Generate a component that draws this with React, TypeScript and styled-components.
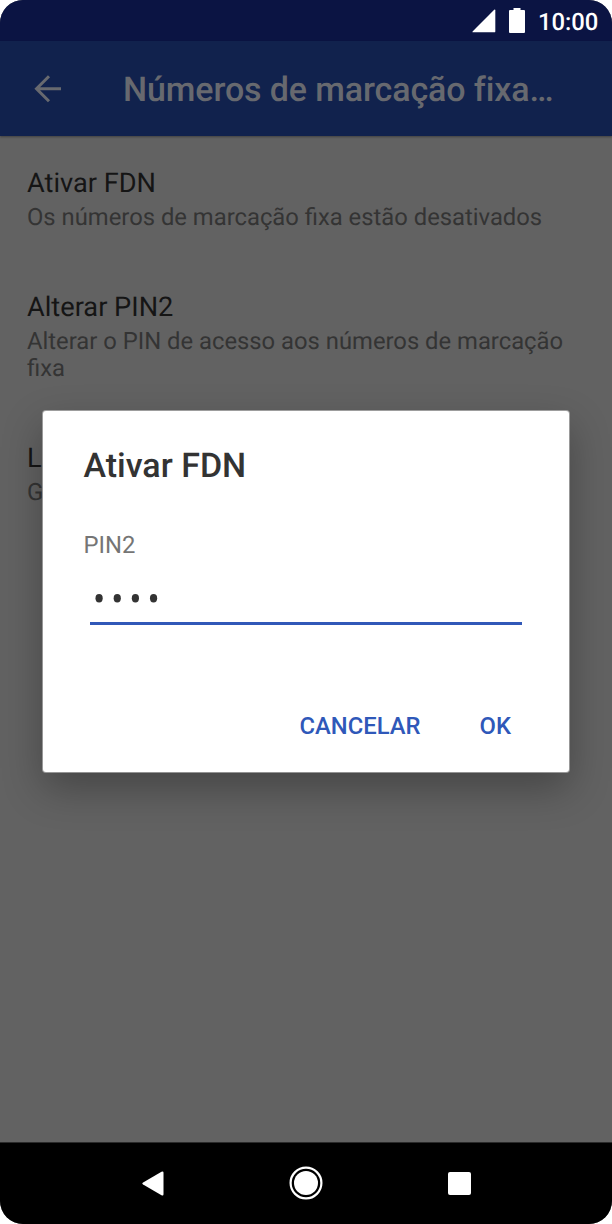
import React from 'react';
import styled, { createGlobalStyle } from 'styled-components';

const GlobalStyle = createGlobalStyle`
  *, *::before, *::after { box-sizing: border-box; }
  body {
    margin: 0;
    background: #fff;
    font-family: Roboto, "Liberation Sans", sans-serif;
    text-rendering: geometricPrecision;
  }
`;

const Phone = styled.div`
  position: relative;
  display: flex;
  flex-direction: column;
  width: 612px;
  height: 1224px;
  overflow: hidden;
  border-radius: 23px;
  background: #626262;
`;

const StatusBar = styled.header`
  display: flex;
  flex: none;
  align-items: center;
  justify-content: flex-end;
  height: 41px;
  padding-right: 14px;
  background: #0b1443;
  color: #fff;
`;

const StatusIcon = styled.svg`
  margin-right: 13px;
`;

const Clock = styled.span`
  width: 60px;
  padding-top: 2px;
  font-size: 23.8px;
  font-weight: 500;
  line-height: 28px;
  white-space: nowrap;
`;

const Toolbar = styled.div`
  display: flex;
  flex: none;
  align-items: center;
  height: 95px;
  padding: 0 27px 0 34px;
  background: #11224d;
  color: #67696f;
  box-shadow: 0 1px 2px rgba(0, 0, 0, 0.35);
`;

const BackButton = styled.button`
  display: flex;
  flex: none;
  width: 89px;
  padding: 0;
  border: 0;
  background: none;
  color: inherit;
`;

const ToolbarTitle = styled.h1`
  margin: 0;
  padding-top: 2px;
  font-size: 34px;
  font-weight: 500;
  line-height: 40px;
  letter-spacing: -0.11px;
  white-space: nowrap;
`;

const Settings = styled.main`
  flex: 1;
  min-height: 0;
`;

const Setting = styled.section`
  padding: 29px 27px 28px;
`;

const SettingTitle = styled.h2`
  margin: 0 0 3px;
  color: #151515;
  font-size: 27.2px;
  font-weight: 400;
  line-height: 36px;
`;

const SettingSummary = styled.p`
  margin: 0;
  color: #343434;
  font-size: 23.8px;
  line-height: 27.7px;
`;

const NavBar = styled.nav`
  display: flex;
  flex: none;
  align-items: center;
  justify-content: center;
  height: 82px;
  padding-bottom: 1px;
  border-top: 1px solid #2b2b2b;
  background: #000;
  color: #fff;
`;

const NavButton = styled.button`
  display: flex;
  justify-content: center;
  width: 153px;
  padding: 0;
  border: 0;
  background: none;
  color: inherit;
`;

const Overlay = styled.div`
  position: absolute;
  top: 411px;
  left: 43px;
`;

const Dialog = styled.form`
  display: flex;
  flex-direction: column;
  width: 526px;
  height: 361px;
  padding: 35px 47px 27px 40.5px;
  border-radius: 3px;
  background: #fff;
  box-shadow: 0 0 0 1px rgba(255, 255, 255, 0.4), 0 16px 40px rgba(0, 0, 0, 0.3);
`;

const DialogTitle = styled.h2`
  margin: 0;
  color: #333;
  font-size: 34px;
  font-weight: 500;
  line-height: 40px;
`;

const FieldLabel = styled.label`
  margin-top: 45px;
  color: #757575;
  font-size: 23.8px;
  line-height: 28px;
`;

const PinField = styled.div`
  display: flex;
  align-items: flex-end;
  height: 66px;
  margin-left: 6.5px;
  padding: 0 0 19px 5px;
  border-bottom: 3.4px solid #3158b8;
`;

const Actions = styled.div`
  display: flex;
  justify-content: flex-end;
  gap: 59px;
  margin-top: auto;
  padding-right: 11px;
`;

const Action = styled.button`
  padding: 0;
  border: 0;
  background: none;
  color: #2f58b9;
  font-family: inherit;
  font-size: 23.8px;
  font-weight: 500;
  line-height: 38px;
`;

const settings = [
  { title: 'Ativar FDN', summary: 'Os números de marcação fixa estão desativados' },
  { title: 'Alterar PIN2', summary: 'Alterar o PIN de acesso aos números de marcação fixa' },
  { title: 'L', summary: 'G' },
];

const pinDigits = [0, 1, 2, 3];

export default function App() {
  return (
    <>
      <GlobalStyle />
      <Phone>
        <StatusBar>
          <StatusIcon width="24" height="24" viewBox="0 0 24 24" fill="currentColor">
            <path d="M22.2.8Q23.3-.1 23.3 1.3V22.4Q23.3 23.3 22.4 23.3H1.2Q-.2 23.3.8 22.2Z" />
          </StatusIcon>
          <StatusIcon width="16" height="25" viewBox="0 0 16 25" fill="currentColor">
            <path d="M4.5 0H11.5V2H15Q16 2 16 3V24Q16 25 15 25H1Q0 25 0 24V3Q0 2 1 2H4.5Z" />
          </StatusIcon>
          <Clock>10:00</Clock>
        </StatusBar>
        <Toolbar>
          <BackButton type="button" aria-label="Voltar">
            <svg width="28" height="28" viewBox="0 0 28 28" fill="none" stroke="currentColor" strokeWidth="3">
              <path d="M27 13.8H2.5M15 1.3L2.5 13.8L15 26.3" />
            </svg>
          </BackButton>
          <ToolbarTitle>Números de marcação fixa…</ToolbarTitle>
        </Toolbar>
        <Settings>
          {settings.map((item) => (
            <Setting key={item.title}>
              <SettingTitle>{item.title}</SettingTitle>
              <SettingSummary>{item.summary}</SettingSummary>
            </Setting>
          ))}
        </Settings>
        <NavBar>
          <NavButton type="button" aria-label="Anterior">
            <svg width="22" height="25" viewBox="0 0 22 25" fill="currentColor">
              <path d="M19.5.7Q21.5-.3 21.5 1.8V23.2Q21.5 25.3 19.5 24.3L1.1 13.6Q-.5 12.5 1.1 11.4Z" />
            </svg>
          </NavButton>
          <NavButton type="button" aria-label="Início">
            <svg width="34" height="34" viewBox="0 0 34 34">
              <circle cx="17" cy="17" r="15.4" fill="none" stroke="currentColor" strokeWidth="2.2" />
              <circle cx="17" cy="17" r="12" fill="currentColor" />
            </svg>
          </NavButton>
          <NavButton type="button" aria-label="Recentes">
            <svg width="23" height="23" viewBox="0 0 23 23">
              <rect width="23" height="23" rx="2" fill="currentColor" />
            </svg>
          </NavButton>
        </NavBar>
        <Overlay>
          <Dialog role="dialog">
            <DialogTitle>Ativar FDN</DialogTitle>
            <FieldLabel>PIN2</FieldLabel>
            <PinField>
              <svg width="64" height="10" viewBox="0 0 64 10" fill="#333">
                {pinDigits.map((digit) => (
                  <ellipse key={digit} cx={4.1 + digit * 18.15} cy="5.3" rx="3.6" ry="4.2" />
                ))}
              </svg>
            </PinField>
            <Actions>
              <Action type="button">CANCELAR</Action>
              <Action type="button">OK</Action>
            </Actions>
          </Dialog>
        </Overlay>
      </Phone>
    </>
  );
}
